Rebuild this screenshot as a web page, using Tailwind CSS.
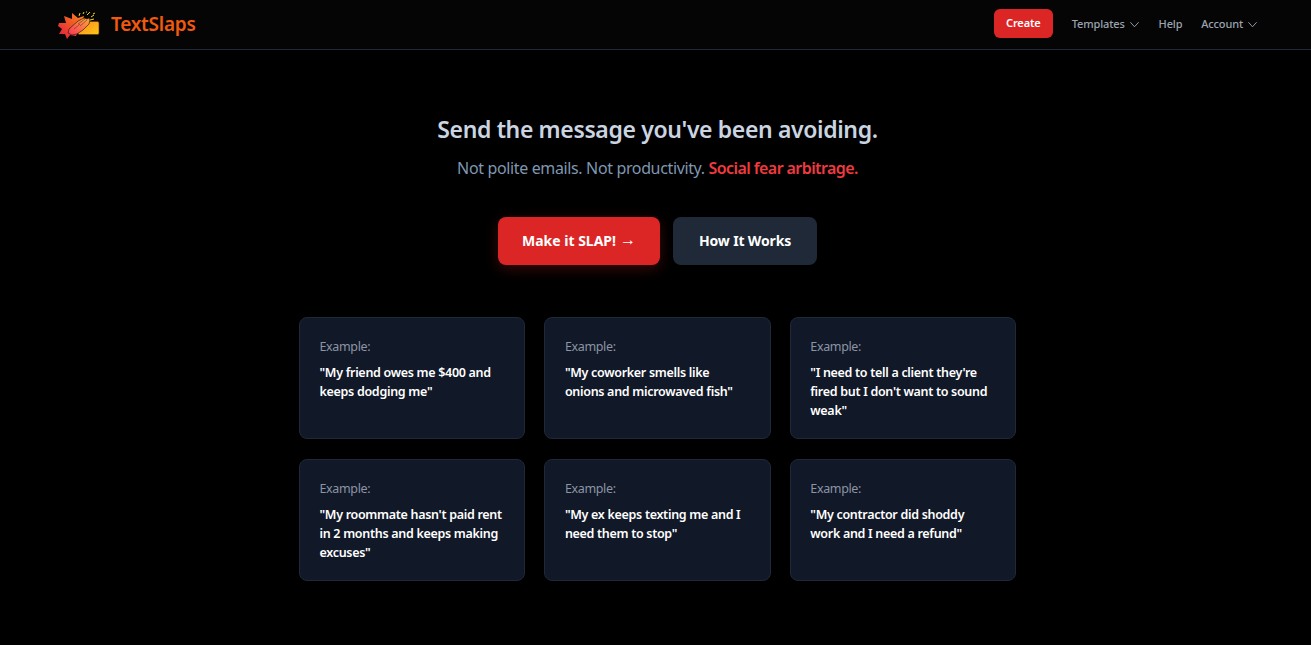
<!DOCTYPE html>
<html><head><meta charset="utf-8"><script src="https://cdn.jsdelivr.net/npm/@tailwindcss/browser@4"></script></head>
<body class="bg-black font-['Noto_Sans',sans-serif] h-[645px] overflow-hidden">
<nav class="h-[50px] bg-[#050505] border-b border-[#1f2937] flex items-center justify-between pl-[58px] pr-[53px]">
  <div class="flex items-center gap-[10px]">
    <svg width="43" height="28" viewBox="0 0 43 28">
      <defs><linearGradient id="a" x1="0" y1="1" x2="1" y2="0"><stop offset="0" stop-color="#e0183c"/><stop offset="1" stop-color="#fb8a18"/></linearGradient>
      <linearGradient id="b" x1="0" y1="0" x2="1" y2="1"><stop offset="0" stop-color="#fb8a1c"/><stop offset="1" stop-color="#fdc818"/></linearGradient>
      <linearGradient id="c" x1="1" y1="0" x2="0" y2="1"><stop offset="0" stop-color="#fdaa38"/><stop offset="1" stop-color="#f8325a"/></linearGradient></defs>
      <rect x="20" y="10.5" width="21" height="13" rx="1.5" fill="url(#b)" stroke="#5c2a08" stroke-width=".6"/>
      <path d="M1 12l7 0-2-7 8 3 0-6 6 5 6-2-2 7-6 13-6-1-3 4-2-5-6 0 3-5-4-3z" fill="url(#a)"/>
      <path d="M10 22l1-4 9-8 6-3 3 1 2-1 1 2-1 4-6 6-6 4-5 1z" fill="url(#c)" stroke="#1a0f08" stroke-width=".6" stroke-linejoin="round"/>
      <path d="M20 13l7-5M22 15l7-6M16 18l6-5" stroke="#1a0f08" stroke-width=".4" fill="none"/>
      <path d="M21 5l1-3M25 3l1-2M29 4l3-3M33 6l3-2M35 3l2-1M32 9l4-1M28 1l1 0" stroke="#f5d020" stroke-width="1" fill="none"/>
    </svg>
    <span class="text-[#f05a0e] text-[19px] font-semibold tracking-[-0.25px]">TextSlaps</span>
  </div>
  <div class="flex items-center text-[11px] font-medium text-[#9ca3af] tracking-[-0.15px]">
    <span class="h-[29px] w-[59px] mr-[19px] mb-[2px] rounded-md bg-[#dc2626] text-white font-semibold flex items-center justify-center">Create</span>
    <span class="flex items-center gap-[4px] mr-[19px]">Templates<svg width="11" height="11" viewBox="0 0 24 24" fill="none" stroke="currentColor" stroke-width="2"><path d="M3 7l9 10 9-10"/></svg></span>
    <span class="mr-[19px]">Help</span>
    <span class="flex items-center gap-[4px]">Account<svg width="11" height="11" viewBox="0 0 24 24" fill="none" stroke="currentColor" stroke-width="2"><path d="M3 7l9 10 9-10"/></svg></span>
  </div>
</nav>
<main class="flex flex-col items-center pl-[4px]">
  <h1 class="mt-[61px] text-[23px] leading-[36px] font-semibold text-[#cbd5e1] tracking-[-0.37px]">Send the message you've been avoiding.</h1>
  <p class="mt-[9px] text-[16px] leading-[24px] text-[#7f97b1] tracking-[-0.36px]">Not polite emails. Not productivity. <span class="text-[#f03a3f] font-semibold tracking-[-0.58px]">Social fear arbitrage.</span></p>
  <div class="mt-[37px] flex gap-[13px]">
    <span class="w-[162px] h-[48px] rounded-lg bg-[#dc2626] text-white text-[14px] leading-[20px] font-bold flex items-center justify-center gap-[4px] shadow-[0_4px_14px_rgba(220,38,38,0.25)]"><span>Make it SLAP!</span><span class="text-[16px] leading-none mb-[4px]">→</span></span>
    <span class="w-[144px] h-[48px] rounded-lg bg-[#1f2937] text-white text-[14px] leading-[20px] font-bold tracking-[-0.15px] flex items-center justify-center">How It Works</span>
  </div>
  <div class="mt-[51.5px] w-[717px] grid grid-cols-3 gap-x-[19.2px] gap-y-[20px]">
    <div class="h-[122.4px] rounded-lg bg-[#111827] border border-[#1f2937] pt-[19px] px-[19.5px]"><p class="text-[12.5px] leading-[19px] text-[#8b95a5] tracking-[-0.35px]">Example:</p><p class="mt-[7px] text-[12.5px] leading-[19.2px] font-semibold text-white tracking-[-0.3px]">"My friend owes me $400 and keeps dodging me"</p></div>
    <div class="h-[122.4px] rounded-lg bg-[#111827] border border-[#1f2937] pt-[19px] px-[19.5px]"><p class="text-[12.5px] leading-[19px] text-[#8b95a5] tracking-[-0.35px]">Example:</p><p class="mt-[7px] text-[12.5px] leading-[19.2px] font-semibold text-white tracking-[-0.3px]">"My coworker smells like onions and microwaved fish"</p></div>
    <div class="h-[122.4px] rounded-lg bg-[#111827] border border-[#1f2937] pt-[19px] px-[19.5px]"><p class="text-[12.5px] leading-[19px] text-[#8b95a5] tracking-[-0.35px]">Example:</p><p class="mt-[7px] text-[12.5px] leading-[19.2px] font-semibold text-white tracking-[-0.3px]">"I need to tell a client they're fired but I don't want to sound weak"</p></div>
    <div class="h-[122.4px] rounded-lg bg-[#111827] border border-[#1f2937] pt-[19px] px-[19.5px]"><p class="text-[12.5px] leading-[19px] text-[#8b95a5] tracking-[-0.35px]">Example:</p><p class="mt-[7px] text-[12.5px] leading-[19.2px] font-semibold text-white tracking-[-0.3px]">"My roommate hasn't paid rent in 2 months and keeps making excuses"</p></div>
    <div class="h-[122.4px] rounded-lg bg-[#111827] border border-[#1f2937] pt-[19px] px-[19.5px]"><p class="text-[12.5px] leading-[19px] text-[#8b95a5] tracking-[-0.35px]">Example:</p><p class="mt-[7px] text-[12.5px] leading-[19.2px] font-semibold text-white tracking-[-0.3px]">"My ex keeps texting me and I need them to stop"</p></div>
    <div class="h-[122.4px] rounded-lg bg-[#111827] border border-[#1f2937] pt-[19px] px-[19.5px]"><p class="text-[12.5px] leading-[19px] text-[#8b95a5] tracking-[-0.35px]">Example:</p><p class="mt-[7px] text-[12.5px] leading-[19.2px] font-semibold text-white tracking-[-0.3px]">"My contractor did shoddy work and I need a refund"</p></div>
  </div>
</main>
</body></html>
